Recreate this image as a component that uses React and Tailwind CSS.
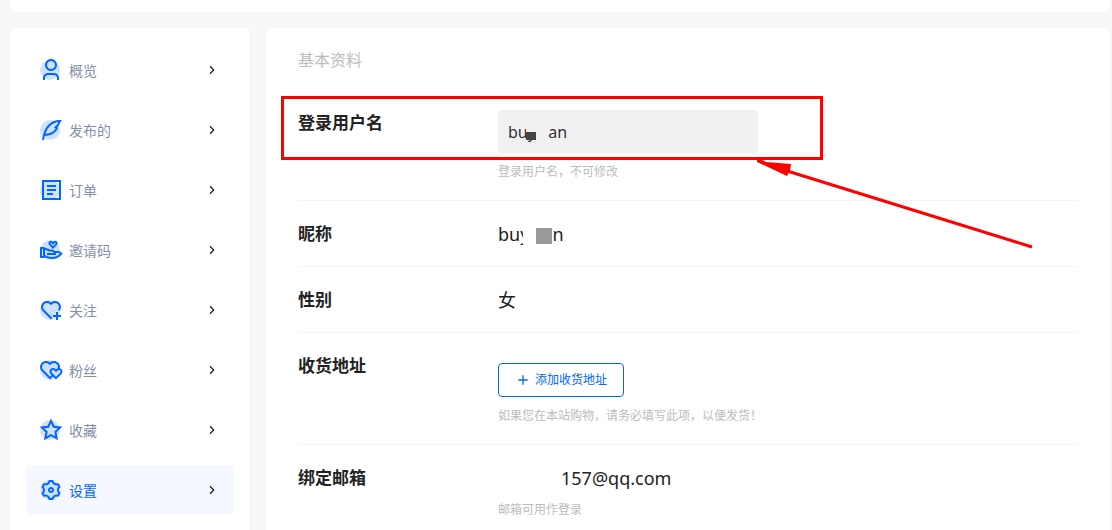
import { useState } from "react"
import {
  RiUser3Line,
  RiHandHeartLine,
  RiHeartAddLine,
  RiHeartsLine,
  RiStarLine,
  RiSettings3Line,
  RiArrowRightSLine,
  RiAddLine
} from "react-icons/ri"

function FeatherIcon() {
  return (
    <svg viewBox="0 0 24 24" fill="none" stroke="currentColor" strokeWidth="2" className="size-6">
      <path d="M4 22C5.5 12 9.5 3.2 21 3C19.6 5.2 19.8 6 18.2 8L16.6 9.2L18 10.2C16.4 14 12 16.6 6 17" />
    </svg>
  )
}

function OrderIcon() {
  return (
    <svg viewBox="0 0 24 24" fill="none" stroke="currentColor" strokeWidth="2" className="size-6">
      <rect x="4" y="3" width="17" height="18" />
      <path d="M8 8h9M8 12h9M8 16h6" />
    </svg>
  )
}

const menuItems = [
  { key: "overview", icon: <RiUser3Line size={24} />, label: "概览" },
  { key: "posts", icon: <FeatherIcon />, label: "发布的" },
  { key: "orders", icon: <OrderIcon />, label: "订单" },
  { key: "invite", icon: <RiHandHeartLine size={24} />, label: "邀请码" },
  { key: "follow", icon: <RiHeartAddLine size={24} />, label: "关注" },
  { key: "fans", icon: <RiHeartsLine size={24} />, label: "粉丝" },
  { key: "favorites", icon: <RiStarLine size={24} />, label: "收藏" },
  { key: "settings", icon: <RiSettings3Line size={24} />, label: "设置" }
]

function Sidebar() {
  const [active, setActive] = useState("settings")

  return (
    <aside className="w-60 shrink-0 rounded bg-white px-4 pt-[17px] pb-4 shadow-[0_0_2px_rgba(0,0,0,0.08)]">
      <nav className="flex flex-col gap-[10px]">
        {menuItems.map((item) => (
          <a
            key={item.key}
            href={`#${item.key}`}
            onClick={() => setActive(item.key)}
            className={`flex h-[50px] items-center rounded pr-[14px] pl-[13px] text-[14px] ${
              active === item.key ? "bg-[#f5f8ff] text-[#0066ff]" : "text-[#8590a6]"
            }`}
          >
            <span className="relative mr-[6px] text-[#0066ff]">
              <span className="absolute top-[2px] left-px size-5 rounded-full bg-[#d0e1ff]" />
              <span className="relative block">{item.icon}</span>
            </span>
            <span className="flex-1">{item.label}</span>
            <RiArrowRightSLine size={16} className="text-[#222]" />
          </a>
        ))}
      </nav>
    </aside>
  )
}

function Row({ label, htmlFor, hint, children }) {
  const Label = htmlFor ? "label" : "div"

  return (
    <div className="relative flex border-b border-[#f4f4f4] pt-5 pb-[19px]">
      <Label htmlFor={htmlFor} className="w-[200px] shrink-0 text-[17px] leading-[26px] font-bold text-[#222]">
        {label}
      </Label>
      <div className="flex-1 text-[18px] leading-[26px] text-[#222]">
        {children}
        {hint && <p className="mt-[10px] text-[12px] leading-[18px] text-[#bcbcbc]">{hint}</p>}
      </div>
    </div>
  )
}

// red frame and arrow that point out the login name
function Callout() {
  return (
    <>
      <div className="pointer-events-none absolute top-[6px] -left-[17px] h-[64px] w-[542px] border-3 border-[#ff0000]" />
      <svg
        className="pointer-events-none absolute top-[69px] left-[458px] z-10 h-[92px] w-[280px]"
        viewBox="0 0 280 92"
        fill="#ff0000"
      >
        <path d="M1 1L6 1L10 3L35 5L34 11L31 17L14 9L1 3Z" />
        <path d="M28 11L276 88" stroke="#ff0000" strokeWidth="3" />
      </svg>
    </>
  )
}

export default function App() {
  return (
    <div className="flex h-screen flex-col gap-4 overflow-hidden bg-[#f7f8fa] pr-[2px] pl-[10px] font-['Noto_Sans','Noto_Sans_CJK_SC',sans-serif]">
      <header className="h-3 shrink-0 rounded-b bg-white shadow-[0_0_2px_rgba(0,0,0,0.08)]" />
      <div className="flex flex-1 gap-4">
        <Sidebar />
        <main className="flex-1 rounded bg-white px-8 pt-5 shadow-[0_0_2px_rgba(0,0,0,0.08)]">
          <h2 className="mb-[18px] text-[16px] leading-6 text-[#bcbcbc]">基本资料</h2>

          <div className="relative">
            <Row label="登录用户名" htmlFor="username" hint="登录用户名，不可修改">
              <div className="relative w-[260px]">
                <input
                  id="username"
                  type="text"
                  readOnly
                  value="buy   an"
                  className="block h-[43px] w-full rounded bg-[#f1f1f1] px-[10px] text-[16px] text-[#333] outline-none"
                />
                <span className="absolute top-3 left-7 bg-[#f1f1f1] pt-[10px]">
                  <span className="block h-2 w-[10px] bg-[#444]" />
                </span>
              </div>
            </Row>
            <Callout />
          </div>

          <Row label="昵称">
            <div className="flex">
              <span>buy</span>
              <span className="relative -ml-[6px] bg-white pt-[7px] pl-[13px]">
                <span className="block size-4 bg-[#999]" />
              </span>
              <span>n</span>
            </div>
          </Row>

          <Row label="性别">女</Row>

          <Row label="收货地址" hint="如果您在本站购物，请务必填写此项，以便发货！">
            <button
              type="button"
              className="mt-[10px] flex h-[34px] items-center gap-1 rounded border border-[#0066ff] px-4 text-[12px] text-[#0066ff]"
            >
              <RiAddLine size={16} />
              添加收货地址
            </button>
          </Row>

          <Row label="绑定邮箱" hint="邮箱可用作登录">
            <div className="pl-[63px]">157@qq.com</div>
          </Row>
        </main>
      </div>
    </div>
  )
}
